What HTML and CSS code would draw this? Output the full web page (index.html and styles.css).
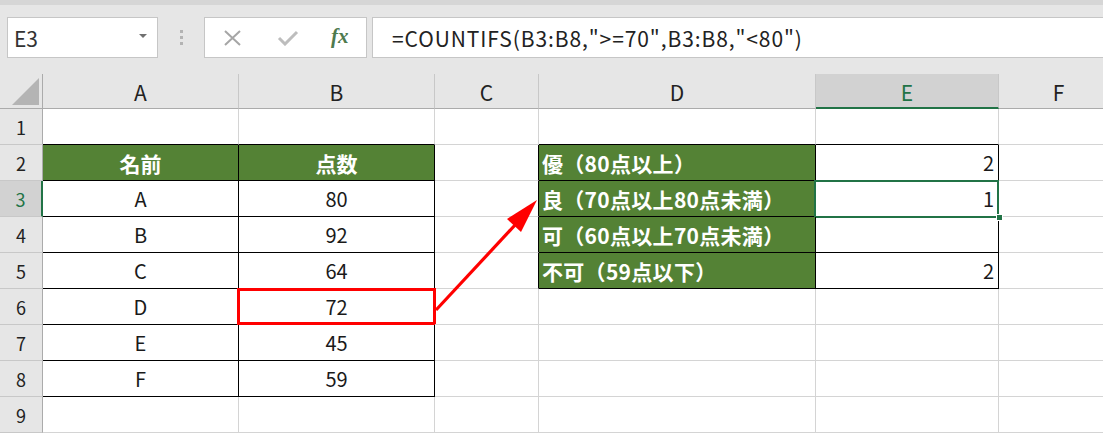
FILE: index.html
```html
<!DOCTYPE html>
<html lang="ja">
<head>
  <meta charset="UTF-8" />
  <title>COUNTIFS</title>
  <link rel="stylesheet" href="styles.css">
</head>
<body>
  <div class="toolbar">
    <div class="namebox"><span>E3</span><span class="caret"></span></div>
    <div class="grip"><i></i><i></i><i></i></div>
    <div class="fxbox">
      <svg class="ico" width="20" height="16" viewBox="0 0 20 16"><path d="M2 1 L17 15 M17 1 L2 15" stroke="#a6a6a6" stroke-width="2" fill="none"/></svg>
      <svg class="ico" width="22" height="16" viewBox="0 0 22 16"><path d="M2 8 L8 14 L20 2" stroke="#bdbdbd" stroke-width="3" fill="none"/></svg>
      <span class="fx">fx</span>
    </div>
    <div class="formula">=COUNTIFS(B3:B8,"&gt;=70",B3:B8,"&lt;80")</div>
  </div>

  <div class="sheet">
    <div class="c col corner"></div>
    <div class="c col">A</div>
    <div class="c col">B</div>
    <div class="c col">C</div>
    <div class="c col">D</div>
    <div class="c col sel">E</div>
    <div class="c col">F</div>

    <div class="c row">1</div>
    <div class="c bkb"></div>
    <div class="c bkb"></div>
    <div class="c"></div>
    <div class="c bkb"></div>
    <div class="c bkb"></div>
    <div class="c"></div>

    <div class="c row">2</div>
    <div class="c bk gr">名前</div>
    <div class="c bk gr">点数</div>
    <div class="c bkr"></div>
    <div class="c bk gr lbl">優（80点以上）</div>
    <div class="c bk val">2</div>
    <div class="c"></div>

    <div class="c row sel">3</div>
    <div class="c bk">A</div>
    <div class="c bk">80</div>
    <div class="c bkr"></div>
    <div class="c bk gr lbl">良（70点以上80点未満）</div>
    <div class="c bk val active">1<span class="handle"></span></div>
    <div class="c"></div>

    <div class="c row">4</div>
    <div class="c bk">B</div>
    <div class="c bk">92</div>
    <div class="c bkr"></div>
    <div class="c bk gr lbl">可（60点以上70点未満）</div>
    <div class="c bk val"></div>
    <div class="c"></div>

    <div class="c row">5</div>
    <div class="c bk">C</div>
    <div class="c bk">64</div>
    <div class="c bkr"></div>
    <div class="c bk gr lbl">不可（59点以下）</div>
    <div class="c bk val">2</div>
    <div class="c"></div>

    <div class="c row">6</div>
    <div class="c bk">D</div>
    <div class="c bk mark">72</div>
    <div class="c"></div>
    <div class="c"></div>
    <div class="c"></div>
    <div class="c"></div>

    <div class="c row">7</div>
    <div class="c bk">E</div>
    <div class="c bk">45</div>
    <div class="c"></div>
    <div class="c"></div>
    <div class="c"></div>
    <div class="c"></div>

    <div class="c row">8</div>
    <div class="c bk">F</div>
    <div class="c bk">59</div>
    <div class="c"></div>
    <div class="c"></div>
    <div class="c"></div>
    <div class="c"></div>

    <div class="c row">9</div>
    <div class="c"></div>
    <div class="c"></div>
    <div class="c"></div>
    <div class="c"></div>
    <div class="c"></div>
    <div class="c"></div>
  </div>

  <svg class="arrow" width="1103" height="434" viewBox="0 0 1103 434">
    <line x1="436" y1="310" x2="516" y2="224" stroke="#ff0000" stroke-width="3.2" />
    <polygon points="537,200 507,219 521,232" fill="#ff0000" />
  </svg>
</body>
</html>
```

FILE: styles.css
```css
* {
  margin: 0;
  padding: 0;
  box-sizing: border-box;
}
body {
  width: 1103px;
  height: 434px;
  overflow: hidden;
  position: relative;
  background: #fff;
  font-family: "Noto Sans CJK JP", "Noto Sans", sans-serif;
  color: #1a1a1a;
}
.toolbar {
  height: 74px;
  background: #e6e6e6;
  border-top: 5px solid #d6d6d6;
  display: flex;
  align-items: flex-start;
  padding: 12px 0 0 7px;
}
.namebox {
  width: 151px;
  height: 41px;
  background: #fff;
  border: 1px solid #c6c6c6;
  display: flex;
  align-items: center;
  justify-content: space-between;
  padding: 0 10px 0 6px;
  font-size: 21px;
  color: #333;
}
.caret {
  border-left: 4px solid transparent;
  border-right: 4px solid transparent;
  border-top: 4px solid #707070;
  margin-bottom: 4px;
}
.grip {
  width: 46px;
  display: flex;
  flex-direction: column;
  align-items: center;
  gap: 3px;
  padding-top: 13px;
}
.grip i {
  width: 3px;
  height: 3px;
  background: #b3b3b3;
}
.fxbox {
  width: 163px;
  height: 41px;
  background: #fff;
  border: 1px solid #c6c6c6;
  display: flex;
  align-items: center;
  padding-left: 18px;
}
.fxbox .ico {
  margin-right: 34px;
}
.fxbox .ico + .ico {
  margin-right: 32px;
}
.fx {
  font-family: "Liberation Serif", serif;
  font-style: italic;
  font-weight: bold;
  font-size: 21px;
  color: #4e7a4e;
  margin-top: -2px;
}
.formula {
  flex: 1;
  margin-left: 5px;
  height: 41px;
  background: #fff;
  border: 1px solid #c6c6c6;
  border-right: none;
  display: flex;
  align-items: center;
  padding-left: 19px;
  font-size: 21px;
  letter-spacing: 0.9px;
  color: #222;
  white-space: nowrap;
}

.sheet {
  display: grid;
  grid-template-columns: 43px 196px 196px 104px 277px 183px 120px;
  grid-template-rows: 35px repeat(9, 36px);
}
.c {
  position: relative;
  border-right: 1px solid #d4d4d4;
  border-bottom: 1px solid #d4d4d4;
  display: flex;
  align-items: center;
  justify-content: center;
  font-size: 20px;
  white-space: nowrap;
}
.col {
  background: #e6e6e6;
  border-right-color: #c8c8c8;
  border-bottom-color: #ababab;
  font-size: 21px;
  color: #222;
  padding-top: 2px;
}
.row {
  background: #e6e6e6;
  border-right-color: #ababab;
  border-bottom-color: #c8c8c8;
  font-size: 18px;
  color: #222;
}
.corner {
  border-right-color: #ababab;
}
.corner::after {
  content: "";
  position: absolute;
  right: 3px;
  bottom: 3px;
  width: 27px;
  height: 27px;
  background: #b4b4b4;
  clip-path: polygon(100% 0, 100% 100%, 0 100%);
}
.col.sel {
  background: #d2d2d2;
  color: #217346;
  border-bottom: 2px solid #217346;
}
.row.sel {
  background: #d2d2d2;
  color: #217346;
  border-right: 2px solid #217346;
}
.bk {
  border-right-color: #000;
  border-bottom-color: #000;
}
.bkb {
  border-bottom-color: #000;
}
.bkr {
  border-right-color: #000;
}
.gr {
  background: #548235;
  color: #fff;
  font-weight: bold;
  font-size: 21px;
}
.lbl {
  justify-content: flex-start;
  padding-left: 3px;
  letter-spacing: 0.3px;
}
.val {
  justify-content: flex-end;
  padding-right: 4px;
}
.mark::after {
  content: "";
  position: absolute;
  top: -1px;
  left: -2px;
  right: -2px;
  bottom: -1px;
  border: 3px solid #ff0000;
}
.active::after {
  content: "";
  position: absolute;
  top: -1px;
  left: -2px;
  right: -1px;
  bottom: -2px;
  border: 2px solid #217346;
}
.handle {
  position: absolute;
  right: -5px;
  bottom: -5px;
  width: 7px;
  height: 7px;
  background: #217346;
  border: 1px solid #fff;
  z-index: 1;
}
.arrow {
  position: absolute;
  left: 0;
  top: 0;
  pointer-events: none;
}
```
